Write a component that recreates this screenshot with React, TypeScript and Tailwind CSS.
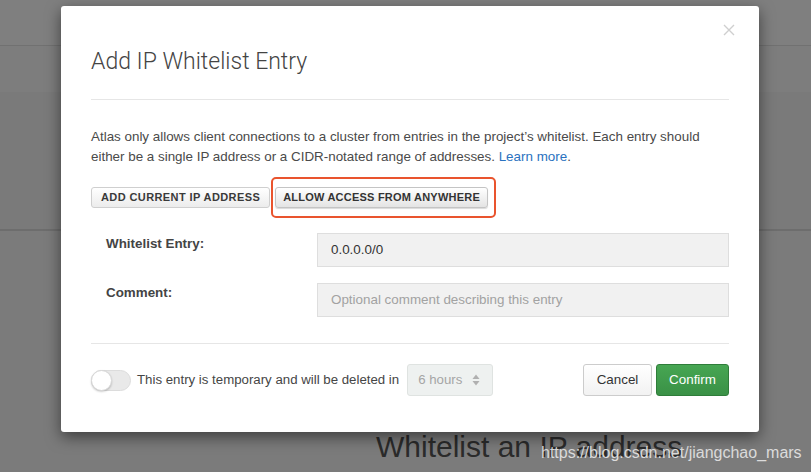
export default function App() {
  return (
    <div className="relative w-[811px] h-[472px] overflow-hidden bg-[#7b7b7b] font-['Liberation_Sans',Arial,sans-serif]">
      {/* Page behind the overlay */}
      <div className="h-[46px] bg-[#7f7f7f] border-b border-[#717171]" />
      <div className="h-[46px] bg-[#7d7d7d]" />
      <div className="h-[139px] bg-[#7a7a7a] border-b-2 border-[#6d6d6d]" />
      <div className="pl-[376px] pt-[200px] text-[30px] leading-[32px] text-[#2b2b2b] font-light">
        Whitelist an IP address
      </div>
      <div className="absolute left-[541px] top-[443px] text-[16px] leading-[20px] text-[#dcdcdc]">
        https://blog.csdn.net/jiangchao_mars
      </div>

      {/* Modal */}
      <div className="absolute left-[61px] top-[6px] w-[698px] h-[426px] bg-white rounded-[3px] shadow-[0_5px_15px_rgba(0,0,0,0.5)] px-[30px] pt-[42px] text-[#494949]">
        <button className="absolute right-[24px] top-[18px] w-[12px] h-[12px]">
          <svg viewBox="0 0 12 12" width="12" height="12">
            <path d="M1 1L11 11M11 1L1 11" stroke="#cfcfcf" strokeWidth="1.4" />
          </svg>
        </button>

        <h2 className="font-['Roboto',sans-serif] font-light text-[23px] leading-[28px] text-[#444]">
          Add IP Whitelist Entry
        </h2>
        <div className="mt-[23px] h-px bg-[#e6e6e6]" />

        <p className="mt-[27px] max-w-[630px] text-[13.4px] leading-[20px] text-[#4a4a4a]">
          Atlas only allows client connections to a cluster from entries in the project’s whitelist. Each entry should either be a single IP address or a CIDR-notated range of addresses.{" "}
          <span className="text-[#2a72c0]">Learn more</span>.
        </p>

        <div className="mt-[20px] flex items-start gap-[5px]">
          <button className="h-[21px] px-[9px] rounded-[3px] border border-[#cfcfcf] bg-gradient-to-b from-white to-[#ececec] text-[11px] font-bold tracking-[0.4px] text-[#3a3a3a] leading-[19px]">
            ADD CURRENT IP ADDRESS
          </button>
          <div className="relative flex">
            <button className="h-[21px] px-[7px] rounded-[3px] border border-[#c4c4c4] bg-gradient-to-b from-white to-[#e4e4e4] text-[11px] font-bold tracking-[0.22px] text-[#333] leading-[19px] shadow-[0_1px_1px_rgba(0,0,0,0.15)]">
              ALLOW ACCESS FROM ANYWHERE
            </button>
            <span className="absolute left-[-4px] right-[-8px] top-[-10px] bottom-[-10px] border-2 border-[#e9542e] rounded-[5px]" />
          </div>
        </div>

        <div className="mt-[25px] flex flex-col gap-[16px] text-[13.4px]">
          <div className="flex items-start">
            <label className="w-[226px] pl-[15px] pt-[1px] font-bold leading-[20px] text-[#444]">
              Whitelist Entry:
            </label>
            <div className="flex-1 h-[34px] flex items-center px-[13px] bg-[#f1f1f1] border border-[#dedede] text-[#333]">
              0.0.0.0/0
            </div>
          </div>
          <div className="flex items-start">
            <label className="w-[226px] pl-[15px] font-bold leading-[20px] text-[#444]">
              Comment:
            </label>
            <div className="flex-1 h-[34px] flex items-center px-[13px] bg-[#f1f1f1] border border-[#dedede] text-[#a2a2a2]">
              Optional comment describing this entry
            </div>
          </div>
        </div>

        <div className="mt-[26px] h-px bg-[#e6e6e6]" />

        <div className="mt-[20px] flex items-center h-[32px] text-[13.25px]">
          <div className="relative w-[40px] h-[21px] rounded-full bg-[#e9e9e9] border border-[#dcdcdc]">
            <span className="absolute left-[-1px] top-[-1px] w-[21px] h-[21px] rounded-full bg-white border border-[#d8d8d8] shadow-[0_1px_2px_rgba(0,0,0,0.2)]" />
          </div>
          <span className="ml-[6px] text-[#454545]">This entry is temporary and will be deleted in</span>
          <div className="ml-[8px] w-[86px] h-[32px] flex items-center justify-between pl-[10px] pr-[12px] rounded-[3px] bg-[#eef1f0] border border-[#dfe3e1] text-[#a5a5a5]">
            <span>6 hours</span>
            <svg viewBox="0 0 8 12" width="8" height="12">
              <path d="M4 0.5L7.5 5H0.5Z" fill="#b0b0b0" />
              <path d="M4 11.5L7.5 7H0.5Z" fill="#b0b0b0" />
            </svg>
          </div>
          <div className="ml-auto flex gap-[4px]">
            <button className="w-[69px] h-[32px] rounded-[3px] border border-[#cccccc] bg-gradient-to-b from-white to-[#f2f2f2] text-[#333] text-[13.4px]">
              Cancel
            </button>
            <button className="w-[73px] h-[32px] rounded-[3px] border border-[#2f7d3a] bg-gradient-to-b from-[#47a653] to-[#3a9146] text-white text-[13.4px]">
              Confirm
            </button>
          </div>
        </div>
      </div>
    </div>
  );
}
